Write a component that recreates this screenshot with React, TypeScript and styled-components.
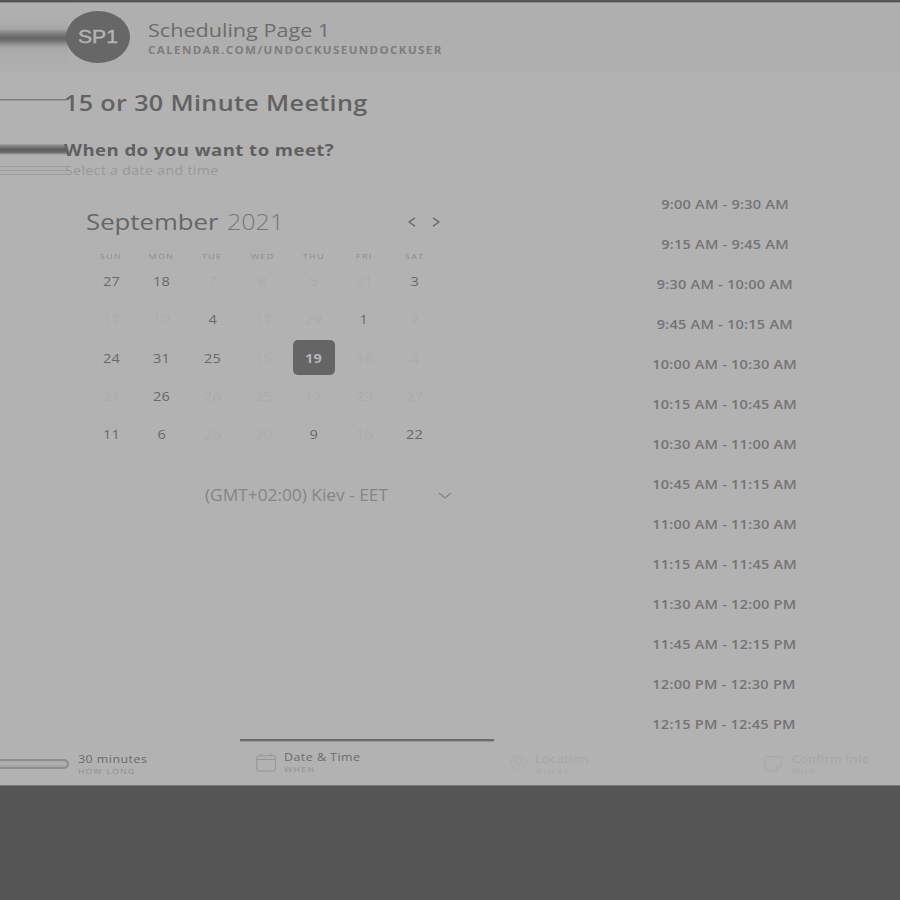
import React, { useLayoutEffect, useRef, useState } from "react";
import styled, { createGlobalStyle } from "styled-components";

const Global = createGlobalStyle`
  * { box-sizing: border-box; }
  body { margin: 0; background: #565656; font-family: "Open Sans", "Noto Sans", sans-serif; color: #656565; }
`;

const Page = styled.div`
  width: 900px;
  height: 900px;
  overflow: hidden;
  display: flex;
  flex-direction: column;
  background: #565656;
  border-top: 2px solid #555;
`;

const Header = styled.header`
  height: 70px;
  flex: none;
  display: flex;
  align-items: flex-start;
  background: #afafaf;
  border-top: 1px solid #8c8c8c;
`;

const HeaderTrail = styled.div`
  width: 68px;
  height: 69px;
  flex: none;
  background: linear-gradient(
    #b1b1b1 0, #adadad 20px, #a5a5a5 26px, #838383 30px, #6a6a6a 34px,
    #676767 36px, #7c7c7c 39px, #989898 42px, #a8a8a8 45px, #acacac 52px, #afafaf 69px
  );
`;

const Avatar = styled.div`
  width: 64px;
  height: 52px;
  margin: 8.3px 0 0 -2px;
  border-radius: 50%;
  flex: none;
  display: flex;
  align-items: center;
  justify-content: center;
  background: #676767;
  font-family: "Liberation Sans", sans-serif;
  -webkit-text-stroke: 0.4px #b4b4b4;
`;

const HeaderText = styled.div`
  display: flex;
  flex-direction: column;
  gap: 2px;
  margin: 13.7px 0 0 17.5px;
`;

const Main = styled.main`
  height: 714px;
  flex: none;
  display: flex;
  flex-direction: column;
  background: #b2b2b2;
  border-bottom: 1px solid #797979;
`;

const TitleRow = styled.div<{ $h: number }>`
  display: flex;
  flex: none;
  height: ${(p) => p.$h}px;
`;

const TitleText = styled.div<{ $top: number }>`
  padding-top: ${(p) => p.$top}px;
`;

const Trail = styled.div<{ $kind: "line" | "band" | "triple" }>`
  width: ${(p) => (p.$kind === "triple" ? 69 : 67)}px;
  margin-right: ${(p) => (p.$kind === "triple" ? -4 : -3)}px;
  flex: none;
  background: ${(p) =>
    p.$kind === "line"
      ? "linear-gradient(#b2b2b2 27px, #7e7e7e 27px, #7e7e7e 28px, #989898 28px, #989898 29px, #b2b2b2 29px)"
      : p.$kind === "band"
        ? "linear-gradient(#b2b2b2 20px, #8c8c8c 21px, #7b7b7b 23px, #606060 25px, #626262 27px, #767676 29px, #999 30px, #b2b2b2 31px)"
        : "linear-gradient(#b2b2b2 3px, #9d9d9d 3px, #9d9d9d 4px, #b0b0b0 4px, #b0b0b0 7px, #9d9d9d 7px, #9d9d9d 8px, #b0b0b0 8px, #b0b0b0 11px, #9d9d9d 11px, #9d9d9d 12px, #b2b2b2 12px)"};
`;

const Columns = styled.div`
  flex: 1;
  min-height: 0;
  display: grid;
  grid-template-columns: 548px 352px;
`;

const CalendarPane = styled.section`
  padding: 24px 0 0 86px;
`;

const MonthRow = styled.div`
  display: flex;
  height: 42px;
  width: 354px;
  gap: 8px;
`;

const Arrows = styled.div`
  display: flex;
  gap: 16px;
  margin: 10px 0 0 auto;
`;

const Week = styled.div<{ $h: number }>`
  display: grid;
  grid-template-columns: repeat(7, 50.6px);
  height: ${(p) => p.$h}px;
  place-items: center;
`;

const DayCell = styled.div<{ $on: boolean }>`
  width: 42px;
  height: 34.5px;
  border-radius: 5px;
  display: flex;
  align-items: center;
  justify-content: center;
  background: ${(p) => (p.$on ? "#656565" : "transparent")};
`;

const Zone = styled.div`
  display: flex;
  align-items: center;
  justify-content: space-between;
  margin: 32px 0 0 118.5px;
  width: 247.5px;
  height: 20px;
`;

const Slots = styled.section`
  display: flex;
  flex-direction: column;
  align-items: center;
  gap: 22px;
  padding: 12px 0 0 1px;
`;

const Steps = styled.nav`
  height: 46px;
  flex: none;
  display: grid;
  grid-template-columns: 240px 253.5px 254px 152.5px;
`;

const Step = styled.div<{ $active?: boolean; $pad: number; $top: number }>`
  display: flex;
  align-items: flex-start;
  padding: ${(p) => p.$top}px 0 0 ${(p) => p.$pad}px;
  box-shadow: ${(p) => (p.$active ? "inset 0 2px #6c6c6c, inset 0 3px #999" : "none")};
`;

const StepLabel = styled.div`
  display: flex;
  flex-direction: column;
  gap: 1px;
  margin-top: -1px;
`;

const StepIcon = styled.div<{ $w: number; $top: number }>`
  width: ${(p) => p.$w}px;
  flex: none;
  margin-top: ${(p) => p.$top}px;
  svg { display: block; }
`;

const Pill = styled.div`
  width: 68.5px;
  height: 10px;
  flex: none;
  margin: 5px 9px 0 0;
  border: 2px solid #8e8e8e;
  border-left: 0;
  border-radius: 0 5px 5px 0;
  background: linear-gradient(#a2a2a2, #b2b2b2 40%, #a2a2a2);
`;

const Wide = styled.div<{ $size: number; $weight: number; $lh: number; $color: string; $ls: number; $center?: boolean }>`
  font-size: ${(p) => p.$size}px;
  font-weight: ${(p) => p.$weight};
  line-height: ${(p) => p.$lh}px;
  height: ${(p) => p.$lh}px;
  letter-spacing: ${(p) => p.$ls}px;
  color: ${(p) => p.$color};
  white-space: nowrap;
  flex: none;
  span { display: inline-block; transform-origin: ${(p) => (p.$center ? "center" : "left")} center; }
`;

type TextProps = {
  children: string; size: number; weight?: number; lh: number; color?: string;
  ls?: number; width?: number; scale?: number; center?: boolean;
};

/** Text in the wide cut used all over the page: stretched to a width, or by a fixed factor. */
function Text({ children, size, weight = 400, lh, color = "#656565", ls = 0, width, scale = 1.12, center }: TextProps) {
  const ref = useRef<HTMLSpanElement>(null);
  const [factor, setFactor] = useState(scale);
  useLayoutEffect(() => {
    if (width && ref.current) setFactor(width / ref.current.offsetWidth);
  }, [width, children]);
  return (
    <Wide $size={size} $weight={weight} $lh={lh} $color={color} $ls={ls} $center={center} style={width ? { width } : undefined}>
      <span ref={ref} style={{ transform: `scaleX(${factor})` }}>{children}</span>
    </Wide>
  );
}

const WEEKDAYS = ["SUN", "MON", "TUE", "WED", "THU", "FRI", "SAT"];
// A leading minus marks a day that cannot be booked.
const DAYS = [
  ["27", "18", "-7", "-8", "-5", "-31", "3"],
  ["-17", "-10", "4", "-17", "-29", "1", "-2"],
  ["24", "31", "25", "-15", "19", "-18", "-4"],
  ["-21", "26", "-26", "-25", "-17", "-23", "-27"],
  ["11", "6", "-26", "-20", "9", "-16", "22"],
];
const SLOTS = [
  "9:00 AM - 9:30 AM", "9:15 AM - 9:45 AM", "9:30 AM - 10:00 AM", "9:45 AM - 10:15 AM",
  "10:00 AM - 10:30 AM", "10:15 AM - 10:45 AM", "10:30 AM - 11:00 AM", "10:45 AM - 11:15 AM",
  "11:00 AM - 11:30 AM", "11:15 AM - 11:45 AM", "11:30 AM - 12:00 PM", "11:45 AM - 12:15 PM",
  "12:00 PM - 12:30 PM", "12:15 PM - 12:45 PM",
];

export default function App() {
  return (
    <>
      <Global />
      <Page>
        <Header>
          <HeaderTrail />
          <Avatar><Text size={18} lh={20} color="#b4b4b4" width={40}>SP1</Text></Avatar>
          <HeaderText>
            <Text size={18.5} lh={25} color="#6c6c6c" width={182}>Scheduling Page 1</Text>
            <Text size={10} lh={12} weight={700} color="#7d7d7d" ls={1.2} width={295}>CALENDAR.COM/UNDOCKUSEUNDOCKUSER</Text>
          </HeaderText>
        </Header>
        <Main>
          <TitleRow $h={52}>
            <Trail $kind="line" />
            <TitleText $top={17}>
              <Text size={21} lh={28} weight={550} ls={0.3} color="#626262" width={304}>15 or 30 Minute Meeting</Text>
            </TitleText>
          </TitleRow>
          <TitleRow $h={39}>
            <Trail $kind="band" />
            <TitleText $top={16}>
              <Text size={16} lh={20} weight={660} ls={0.4} color="#606060" width={270}>When do you want to meet?</Text>
            </TitleText>
          </TitleRow>
          <TitleRow $h={20}>
            <Trail $kind="triple" />
            <Text size={12.5} lh={15} ls={0.3} color="#989898" width={154}>Select a date and time</Text>
          </TitleRow>
          <Columns>
            <CalendarPane>
              <MonthRow>
                <Text size={21.5} lh={30} color="#666" width={133}>September</Text>
                <Text size={21.5} lh={30} weight={300} color="#787878" width={57}>2021</Text>
                <Arrows>
                  <svg width="8" height="10" viewBox="0 0 8 10"><path d="M7 .8 1.2 5 7 9.2" fill="none" stroke="#656565" strokeWidth="1.4" /></svg>
                  <svg width="8" height="10" viewBox="0 0 8 10"><path d="M1 .8 6.8 5 1 9.2" fill="none" stroke="#656565" strokeWidth="1.4" /></svg>
                </Arrows>
              </MonthRow>
              <Week $h={13}>
                {WEEKDAYS.map((d) => <Text key={d} size={8} lh={12} ls={1.2} color="#8d8d8d" center>{d}</Text>)}
              </Week>
              {DAYS.map((row, r) => (
                <Week $h={38.25} key={r}>
                  {row.map((d, c) => {
                    const on = d === "19";
                    const muted = d[0] === "-";
                    return (
                      <DayCell $on={on} key={c}>
                        <Text size={13} lh={18} ls={0.1} center weight={on ? 700 : muted ? 300 : 500} color={on ? "#b4b4b4" : muted ? "#a9a9a9" : "#696969"}>
                          {d.replace("-", "")}
                        </Text>
                      </DayCell>
                    );
                  })}
                </Week>
              ))}
              <Zone>
                <Text size={15.5} lh={20} color="#858585" width={183}>(GMT+02:00) Kiev - EET</Text>
                <svg width="14" height="8" viewBox="0 0 14 8"><path d="M1 2 7 7 13 2" fill="none" stroke="#858585" strokeWidth="1.2" /></svg>
              </Zone>
            </CalendarPane>
            <Slots>
              {SLOTS.map((s) => (
                <Text key={s} size={13} lh={18} ls={0.2} weight={550} center color="#747474">{s}</Text>
              ))}
            </Slots>
          </Columns>
          <Steps>
            <Step $pad={0} $top={15}>
              <Pill />
              <StepLabel>
                <Text size={11} lh={12} ls={0.4} color="#6b6b6b" width={69}>30 minutes</Text>
                <Text size={6.5} lh={12} ls={1} color="#8e8e8e" width={58}>HOW LONG</Text>
              </StepLabel>
            </Step>
            <Step $active $pad={16} $top={13}>
              <StepIcon $w={28} $top={1}>
                <svg width="20" height="19" viewBox="0 0 20 19" fill="none" stroke="#959595">
                  <rect x=".7" y="2.7" width="18.6" height="15.3" rx="2" /><path d="M.7 6.5h18.6M5 .5v3M15 .5v3" />
                </svg>
              </StepIcon>
              <StepLabel>
                <Text size={11} lh={12} ls={0.4} color="#6b6b6b" width={77}>Date &amp; Time</Text>
                <Text size={6.5} lh={12} ls={1} color="#8e8e8e" width={31}>WHEN</Text>
              </StepLabel>
            </Step>
            <Step $pad={16} $top={15}>
              <StepIcon $w={25.5} $top={1}>
                <svg width="17" height="17" viewBox="0 0 17 17" fill="none" stroke="#a8a8a8" strokeWidth=".8">
                  <path d="M8.5 16.5C4 12 .7 9.5 .7 6.3a7.8 5.8 0 0 1 15.6 0c0 3.2-3.3 5.7-7.8 10.2Z" /><ellipse cx="8.5" cy="6.3" rx="3.4" ry="2.8" />
                </svg>
              </StepIcon>
              <StepLabel>
                <Text size={11} lh={12} ls={0.4} color="#a6a6a6" width={54}>Location</Text>
                <Text size={6.5} lh={12} ls={1} color="#a7a7a7" width={35}>WHERE</Text>
              </StepLabel>
            </Step>
            <Step $pad={16} $top={15}>
              <StepIcon $w={28} $top={2}>
                <svg width="19" height="16" viewBox="0 0 19 16" fill="none" stroke="#a6a6a6" strokeWidth=".9">
                  <path d="M12.5 14.8H2Q.7 14.8 .7 13.5V2Q.7 .7 2 .7h14.5q1.5 0 1.5 1.3v8l-5.5 4.8V11.3q0-1.3 1.3-1.3H18" />
                </svg>
              </StepIcon>
              <StepLabel>
                <Text size={11} lh={12} ls={0.4} color="#a6a6a6" width={78}>Confirm Info</Text>
                <Text size={6.5} lh={12} ls={1} color="#a7a7a7" width={25}>WHO</Text>
              </StepLabel>
            </Step>
          </Steps>
        </Main>
      </Page>
    </>
  );
}
